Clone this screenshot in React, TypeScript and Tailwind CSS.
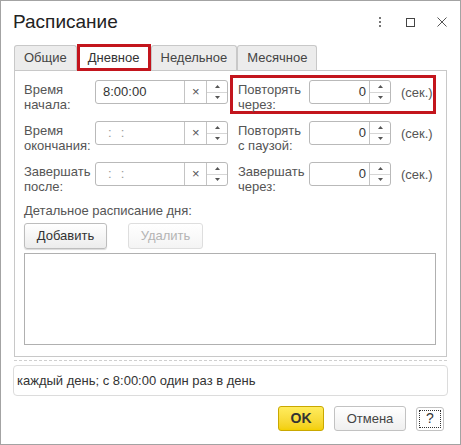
import React from "react";

const Spin = () => (
  <div className="w-[21px] h-full flex flex-col border-l border-[#c4c4c4]">
    <div className="flex-1 flex items-center justify-center border-b border-[#d6d6d6]">
      <svg width="5" height="3" viewBox="0 0 5 3">
        <path d="M2.5 0 L5 3 L0 3 Z" fill="#555" />
      </svg>
    </div>
    <div className="flex-1 flex items-center justify-center">
      <svg width="5" height="3" viewBox="0 0 5 3">
        <path d="M0 0 L5 0 L2.5 3 Z" fill="#555" />
      </svg>
    </div>
  </div>
);

const TimeField = ({ value }: { value?: string }) => (
  <div className="w-[133px] h-[24px] flex border border-[#b9b9b9] rounded-[3px] bg-white shrink-0">
    <div className="w-[89px] flex items-center pl-[7px] text-[13px] text-[#333]">
      {value ? (
        value
      ) : (
        <span className="text-[#9a9a9a] pl-[5px]">
          :<span className="inline-block w-[9px]" />:
        </span>
      )}
    </div>
    <div className="w-[22px] flex items-center justify-center border-l border-[#c4c4c4] text-[13px] text-[#555]">
      ×
    </div>
    <Spin />
  </div>
);

const NumField = () => (
  <div className="w-[82px] h-[24px] flex border border-[#b9b9b9] rounded-[3px] bg-white shrink-0">
    <div className="flex-1 flex items-center justify-end pr-[3px] text-[13px] text-[#333]">0</div>
    <Spin />
  </div>
);

const Label = ({ a, b, w }: { a: string; b: string; w: string }) => (
  <div className={`${w} text-[13px] leading-[15px] text-[#555] shrink-0 pt-[2px]`}>
    <div>{a}</div>
    <div>{b}</div>
  </div>
);

const tabs = ["Общие", "Дневное", "Недельное", "Месячное"];

export default function App() {
  return (
    <div className="w-[461px] h-[445px] bg-white border border-[#a3a3a3] font-['Liberation_Sans',Arial,sans-serif] flex flex-col">
      {/* header */}
      <div className="h-[43px] flex items-start">
        <div className="pl-[12px] pt-[10px] text-[19px] leading-[22px] text-[#222]">Расписание</div>
        <div className="ml-auto flex items-center pt-[16px] pr-[13px]">
          <div className="flex flex-col gap-[2px] mr-[25px]">
            <span className="w-[2px] h-[2px] bg-[#777]" />
            <span className="w-[2px] h-[2px] bg-[#777]" />
            <span className="w-[2px] h-[2px] bg-[#777]" />
          </div>
          <div className="w-[9px] h-[9px] border border-[#444] mr-[22px]" />
          <svg width="10" height="10" viewBox="0 0 10 10">
            <path d="M0.5 0.5 L9.5 9.5 M9.5 0.5 L0.5 9.5" stroke="#555" strokeWidth="1" />
          </svg>
        </div>
      </div>

      {/* tabs */}
      <div className="flex items-end h-[26px] pl-[13px] relative z-10">
        {tabs.map((t) =>
          t === "Дневное" ? (
            <div
              key={t}
              className="h-[27px] -mb-px flex items-center px-[8px] bg-white border-[3px] border-[#c3151d] text-[13px] text-[#333]"
            >
              {t}
            </div>
          ) : (
            <div
              key={t}
              className="h-[25px] flex items-center px-[9px] bg-[#ececec] border border-b-0 border-[#c8c8c8] rounded-t-[3px] text-[13px] text-[#444]"
            >
              {t}
            </div>
          )
        )}
      </div>

      {/* panel */}
      <div className="mx-[13px] h-[287px] border border-[#c8c8c8] pt-[4px] pl-[9px] pr-[10px]">
        <div className="flex gap-[2px]">
          <div className="w-[204px] flex flex-col gap-[2px]">
            {[
              ["Время", "начала:", "8:00:00"],
              ["Время", "окончания:", ""],
              ["Завершать", "после:", ""],
            ].map(([a, b, v]) => (
              <div key={b} className="h-[39px] flex pt-[5px]">
                <Label a={a} b={b} w="w-[71px]" />
                <TimeField value={v} />
              </div>
            ))}
          </div>
          <div className="w-[208px] flex flex-col gap-[2px]">
            {[
              ["Повторять", "через:"],
              ["Повторять", "с паузой:"],
              ["Завершать", "через:"],
            ].map(([a, b], i) => (
              <div
                key={a + b}
                className={`h-[39px] flex pt-[2px] pl-[5px] border-[3px] ${
                  i === 0 ? "border-[#c3151d]" : "border-transparent"
                }`}
              >
                <Label a={a} b={b} w="w-[71px]" />
                <NumField />
                <div className="pl-[10px] pt-[3px] text-[13px] text-[#555]">(сек.)</div>
              </div>
            ))}
          </div>
        </div>

        <div className="mt-[7px] text-[13px] leading-[16px] text-[#555]">Детальное расписание дня:</div>
        <div className="flex gap-[21px] mt-[4px]">
          <button className="w-[83px] h-[26px] rounded-[3px] border border-[#bdbdbd] bg-gradient-to-b from-white to-[#ececec] shadow-[0_1px_1px_rgba(0,0,0,0.15)] text-[13px] text-[#333]">
            Добавить
          </button>
          <button className="w-[75px] h-[26px] rounded-[3px] border border-[#dedede] bg-gradient-to-b from-white to-[#f4f4f4] text-[13px] text-[#b4b4b4]">
            Удалить
          </button>
        </div>
        <div className="mt-[4px] h-[92px] border border-[#b0b0b0] bg-white" />
      </div>

      {/* dashed separator */}
      <div className="mx-[13px] mt-[3px] border-t border-dashed border-[#cfcfcf]" />

      {/* summary */}
      <div className="mx-[12px] mt-[4px] h-[31px] border border-[#dcdcdc] rounded-[4px] flex items-center pl-[3px] text-[13px] text-[#333]">
        каждый день; с 8:00:00 один раз в день
      </div>

      {/* footer buttons */}
      <div className="flex justify-end items-center gap-[10px] pr-[16px] mt-[10px]">
        <button className="w-[46px] h-[25px] rounded-[3px] border border-[#c9a800] bg-gradient-to-b from-[#ffec5c] to-[#f3cf00] text-[14px] font-bold text-[#333]">
          OK
        </button>
        <button className="w-[72px] h-[25px] rounded-[3px] border border-[#c2c2c2] bg-gradient-to-b from-white to-[#efefef] text-[13px] text-[#444]">
          Отмена
        </button>
        <button className="w-[28px] h-[24px] rounded-[3px] border border-[#c2c2c2] bg-white p-[2px]">
          <div className="w-full h-full border border-dotted border-[#333] flex items-center justify-center text-[14px] text-[#333]">
            ?
          </div>
        </button>
      </div>
    </div>
  );
}
